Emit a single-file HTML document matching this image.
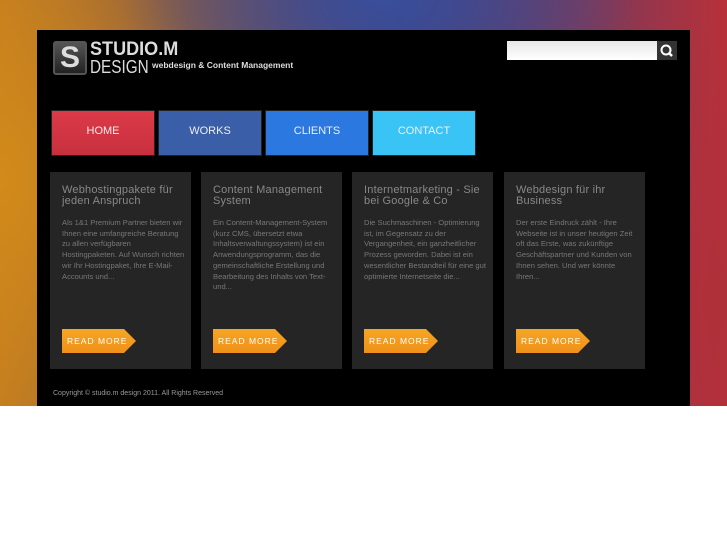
<!DOCTYPE html>
<html><head><meta charset="utf-8"><style>
*{margin:0;padding:0;box-sizing:border-box}
body{width:727px;height:545px;background:#fff;font-family:"Liberation Sans",sans-serif;position:relative;overflow:hidden}
.bg{position:absolute;left:0;top:0;width:727px;height:406px;
background:
radial-gradient(ellipse 260px 120px at 380px 0px,#3a4e9a 0%,rgba(58,78,154,0) 100%),
radial-gradient(ellipse 200px 300px at 727px 300px,#b0303a 0%,rgba(176,48,58,0) 100%),
radial-gradient(ellipse 220px 320px at 0px 180px,#d28a1a 0%,rgba(210,138,26,0) 100%),
linear-gradient(90deg,#c07a20 0%,#6a4a5a 40%,#3c3f80 55%,#7a3a5a 80%,#b8303a 100%);}
.panel{position:absolute;left:37px;top:30px;width:653px;height:376px;background:#000}
.abs{position:absolute}
.logo{left:53px;top:41px;width:34px;height:34px;border:2px solid #555;border-radius:3px;background:linear-gradient(#555,#222);color:#ddd;font:bold 30px/30px "Liberation Sans";text-align:center}
.nav{top:110px;height:46px;color:#eee;font-size:11px;text-align:center;line-height:40px;border:1px solid #222}
.card{top:172px;width:141px;height:197px;background:#252525}
.card h3{position:absolute;left:12px;top:13px;width:128px;font-weight:normal;font-size:11px;line-height:11px;color:#888;letter-spacing:0.2px}
.card p{position:absolute;left:12px;top:46px;width:124px;font-size:7.6px;line-height:10.7px;color:#777}
.rm{position:absolute;left:12px;top:157px;width:74px;height:24px;background:linear-gradient(#f5a623,#f0901a);clip-path:polygon(0 0,62px 0,74px 12px,62px 24px,0 24px);color:#fff;font-size:8.5px;letter-spacing:1px;line-height:24px;padding-left:5px}
</style></head><body>
<div class="bg"></div>
<div class="panel"></div>
<div class="abs logo">S</div>
<div class="abs" style="left:90px;top:40px;color:#ddd;font:bold 19px/19px 'Liberation Sans';transform:scaleX(0.95);transform-origin:left">STUDIO.M</div>
<div class="abs" style="left:90px;top:58px;color:#ddd;font:18px/18px 'Liberation Sans';transform:scaleX(0.85);transform-origin:left">DESIGN</div>
<div class="abs" style="left:152px;top:60px;color:#ddd;font:bold 8.5px/10px 'Liberation Sans'">webdesign &amp; Content Management</div>
<div class="abs" style="left:507px;top:41px;width:150px;height:19px;background:linear-gradient(#e6e6e6,#fff)"></div>
<div class="abs" style="left:657px;top:41px;width:20px;height:19px;background:#333"><svg width="20" height="19"><circle cx="9" cy="9" r="4.5" stroke="#fff" stroke-width="2" fill="none"/><line x1="12" y1="12" x2="15" y2="15" stroke="#fff" stroke-width="2.5"/></svg></div>
<div class="abs nav" style="left:51px;width:104px;background:linear-gradient(#dc3a48,#c8303e)">HOME</div>
<div class="abs nav" style="left:158px;width:104px;background:#3a5ea8">WORKS</div>
<div class="abs nav" style="left:265px;width:104px;background:#2a78e0">CLIENTS</div>
<div class="abs nav" style="left:372px;width:104px;background:#3ac4f5">CONTACT</div>
<div class="abs card" style="left:50px"><h3>Webhostingpakete für jeden Anspruch</h3><p>Als 1&amp;1 Premium Partner bieten wir Ihnen eine umfangreiche Beratung zu allen verfügbaren Hostingpaketen. Auf Wunsch richten wir Ihr Hostingpaket, Ihre E-Mail-Accounts und...</p><div class="rm">READ MORE</div></div>
<div class="abs card" style="left:201px"><h3>Content Management System</h3><p>Ein Content-Management-System (kurz CMS, übersetzt etwa Inhaltsverwaltungssystem) ist ein Anwendungsprogramm, das die gemeinschaftliche Erstellung und Bearbeitung des Inhalts von Text-und...</p><div class="rm">READ MORE</div></div>
<div class="abs card" style="left:352px"><h3>Internetmarketing - Sie bei Google &amp; Co</h3><p>Die Suchmaschinen - Optimierung ist, im Gegensatz zu der Vergangenheit, ein ganzheitlicher Prozess geworden. Dabei ist ein wesentlicher Bestandteil für eine gut optimierte Internetseite die...</p><div class="rm">READ MORE</div></div>
<div class="abs card" style="left:504px"><h3>Webdesign für ihr Business</h3><p>Der erste Eindruck zählt - Ihre Webseite ist in unser heutigen Zeit oft das Erste, was zukünftige Geschäftspartner und Kunden von Ihnen sehen. Und wer könnte Ihren...</p><div class="rm">READ MORE</div></div>
<div class="abs" style="left:53px;top:390px;color:#999;font-size:7px">Copyright © studio.m design 2011. All Rights Reserved</div>
</body></html>
